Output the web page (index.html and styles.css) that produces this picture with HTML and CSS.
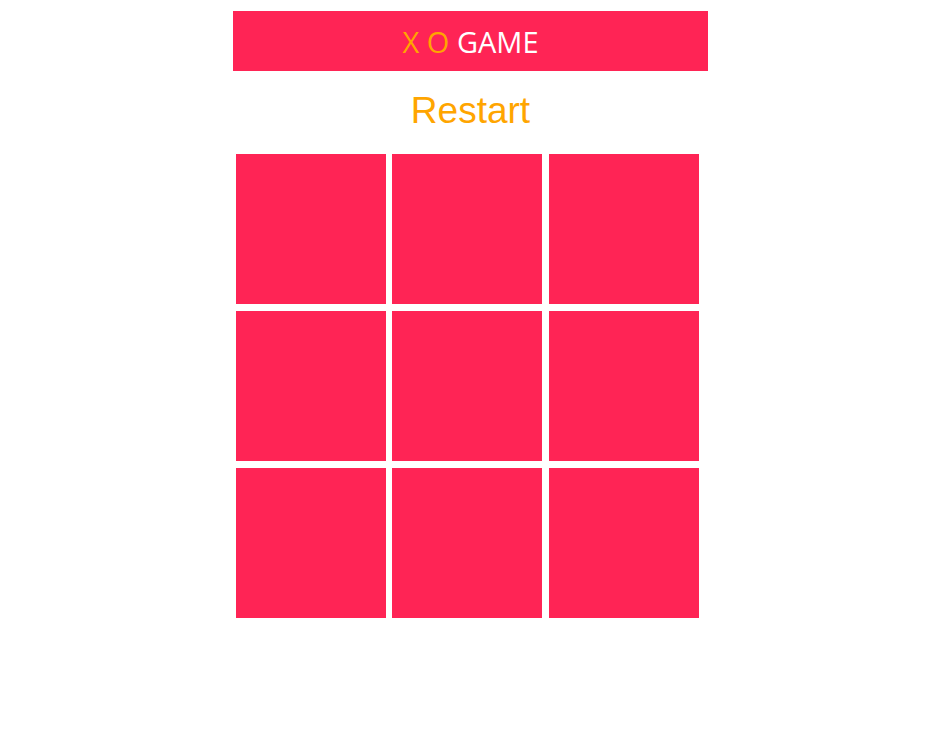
FILE: index.html
```html
<!DOCTYPE html>
<html>
<head>
<meta charset="utf-8">
<link rel="stylesheet" href="styles.css">
</head>
<body>
<div class="app">
  <header class="title"><span class="xo">X O</span> GAME</header>
  <div class="restart">Restart</div>
  <div class="board">
    <div class="cell"></div><div class="cell"></div><div class="cell"></div>
    <div class="cell"></div><div class="cell"></div><div class="cell"></div>
    <div class="cell"></div><div class="cell"></div><div class="cell"></div>
  </div>
</div>
</body>
</html>
```
FILE: styles.css
```css
html, body { margin: 0; padding: 0; background: #fff; }
.app {
  width: 475px;
  margin: 11px 0 0 233px;
}
.title {
  height: 59px;
  padding-top: 1px;
  background: #ff2455;
  color: #fff;
  font-family: "Open Sans", sans-serif;
  font-size: 29px;
  line-height: 59px;
  text-align: center;
}
.xo { color: #ffa500; }
.restart {
  margin-top: 19px;
  height: 42px;
  line-height: 42px;
  font-family: "Liberation Sans", Arial, sans-serif;
  font-size: 37px;
  color: #ffa500;
  text-align: center;
}
.board {
  margin: 22.3px 0 0 2.7px;
  display: grid;
  grid-template-columns: repeat(3, 150px);
  grid-auto-rows: 150px;
  gap: 6.67px;
}
.cell { background: #ff2455; }
```
